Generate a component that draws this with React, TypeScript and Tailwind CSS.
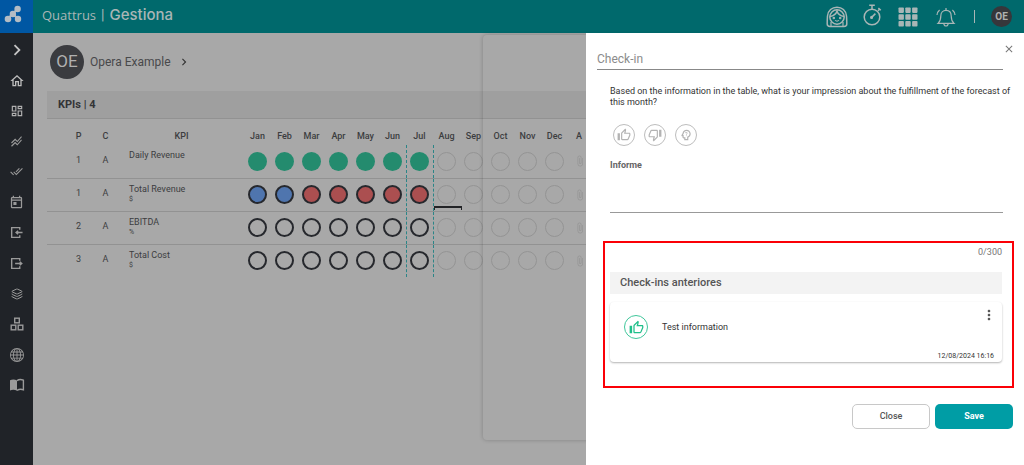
import React, { useState } from "react";
import { Layers } from "lucide-react";
import { BsGlobe } from "react-icons/bs";
import {
  MdAttachFile,
  MdChevronRight,
  MdClose,
  MdDoneAll,
  MdMoreVert,
  MdOutlineDashboard,
  MdOutlineHome,
  MdOutlinePsychologyAlt,
  MdOutlineThumbDown,
  MdOutlineThumbUp,
  MdOutlineToday,
  MdStackedLineChart,
} from "react-icons/md";

type Status = "green" | "blue" | "red" | "empty" | "future";

type Kpi = {
  p: number;
  c: string;
  name: string;
  unit?: string;
  months: Status[];
};

const MONTHS = ["Jan", "Feb", "Mar", "Apr", "May", "Jun", "Jul", "Aug", "Sep", "Oct", "Nov", "Dec"];

const future: Status[] = ["future", "future", "future", "future", "future"];
const fill = (s: Status, n: number): Status[] => Array(n).fill(s);

const KPIS: Kpi[] = [
  { p: 1, c: "A", name: "Daily Revenue", months: [...fill("green", 7), ...future] },
  { p: 1, c: "A", name: "Total Revenue", unit: "$", months: [...fill("blue", 2), ...fill("red", 5), ...future] },
  { p: 2, c: "A", name: "EBITDA", unit: "%", months: [...fill("empty", 7), ...future] },
  { p: 3, c: "A", name: "Total Cost", unit: "$", months: [...fill("empty", 7), ...future] },
];

const STATUS_CLASS: Record<Status, string> = {
  green: "bg-[#248b6e]",
  blue: "border-2 border-[#26282d] bg-[#4f75ae]",
  red: "border-2 border-[#26282d] bg-[#ab4f50]",
  empty: "border-2 border-[#26282d]",
  future: "border border-[#949494]",
};

const Logo = () => (
  <svg viewBox="0 0 18 18" className="h-[18px] w-[18px]" fill="#b4bcc4">
    <path d="M3.5 14 L13.5 4 M9 9 L14 14" stroke="#b4bcc4" strokeWidth="2" />
    <circle cx="13.6" cy="4" r="3.2" />
    <circle cx="8.9" cy="9" r="3.2" />
    <circle cx="4" cy="14" r="3.3" />
    <circle cx="14" cy="14" r="3.2" />
  </svg>
);

const BoxArrow = ({ out }: { out?: boolean }) => (
  <svg viewBox="0 0 14 14" className="h-[13px] w-[13px]" fill="none" stroke="currentColor" strokeWidth="1.5">
    <path d="M10.5 4 V1.8 H1.8 V12.2 H10.5 V10" />
    {out ? <path d="M5.5 7 H12.5 M10.5 5 L12.7 7 L10.5 9" /> : <path d="M13.5 7 H6.5 M8.7 5 L6.5 7 L8.7 9" />}
  </svg>
);

const Boxes = () => (
  <svg viewBox="0 0 14 14" className="h-[14px] w-[14px]" fill="none" stroke="currentColor" strokeWidth="1.4">
    <rect x="4.7" y="1.2" width="4.6" height="4.6" />
    <rect x="1.2" y="8.2" width="4.6" height="4.6" />
    <rect x="8.2" y="8.2" width="4.6" height="4.6" />
  </svg>
);

const Book = () => (
  <svg viewBox="0 0 16 14" className="h-[14px] w-4" fill="currentColor">
    <path d="M8 2.6 C6 1.2 3.2 1.3 1 2.2 V12.4 C3.2 11.5 6 11.5 8 12.8 Z" />
    <path
      d="M8 2.6 C10 1.2 12.4 1.3 14.4 2.2 V11.8 C12.4 11.1 10 11.2 8 12.4"
      fill="none"
      stroke="currentColor"
      strokeWidth="1.4"
    />
  </svg>
);

const Girl = () => (
  <svg viewBox="0 0 22 22" className="h-[22px] w-[22px]" fill="none" stroke="currentColor" strokeWidth="1.5">
    <path d="M1.2 18 C1.2 14 1.3 13 1.5 10 C2 4.5 6 1.2 11 1.2 C16 1.2 20 4.5 20.5 10 C20.7 13 20.8 14 20.8 18 C20.8 20 20 20.4 18 20.4 H4 C2 20.4 1.2 20 1.2 18 Z" />
    <circle cx="11" cy="11" r="7.2" />
    <path d="M3.8 10.5 C7.5 10 10 8.4 11 5 C12 8.4 14.5 10 18.2 10.5" />
    <path d="M5 16 V20 M17 16 V20" strokeWidth="1.2" />
    <path d="M9 14.4 Q11 15.8 13 14.4" strokeWidth="1.1" />
    <circle cx="7.8" cy="12" r="0.5" fill="currentColor" />
    <circle cx="14.2" cy="12" r="0.5" fill="currentColor" />
  </svg>
);

const Stopwatch = () => (
  <svg viewBox="0 0 20 22" className="h-[22px] w-5" fill="none" stroke="currentColor" strokeWidth="1.5">
    <circle cx="10" cy="13" r="7.8" />
    <path d="M10 5 V1.5 M7.2 1.2 H12.8 M16 6.8 L17.6 5.2 M16.4 4 L18.8 6.2 M9.4 13.6 L13.4 9.6" />
    <circle cx="9.6" cy="13.4" r="0.8" fill="currentColor" />
  </svg>
);

const AppsGrid = () => (
  <svg viewBox="0 0 20 20" className="h-5 w-5" fill="currentColor">
    {[0.5, 7.3, 14.1].map((y) => [0.5, 7.3, 14.1].map((x) => <rect key={`${x}-${y}`} x={x} y={y} width="5.4" height="5.4" rx="0.8" />))}
  </svg>
);

const Bell = () => (
  <svg viewBox="0 0 20 20" className="h-5 w-5" fill="none" stroke="currentColor" strokeWidth="1.2">
    <path d="M2 16.4 C4 14.6 4.8 13 4.8 9 C4.8 5.5 7 3.4 10 3.4 C13 3.4 15.2 5.5 15.2 9 C15.2 13 16 14.6 18 16.4 Z" />
    <path d="M10 3.4 V1 M7.8 16.6 Q8.2 19 10 19 Q11.8 19 12.2 16.6" />
    <path d="M3.6 3 Q1.2 5 1 8 M16.4 3 Q18.8 5 19 8" />
  </svg>
);

const NAV = [
  { label: "Expand", icon: <MdChevronRight size={22} className="text-[#c4c4c4]" /> },
  { label: "Home", icon: <MdOutlineHome size={16} className="text-[#bdbdbd]" /> },
  { label: "Dashboard", icon: <MdOutlineDashboard size={14} className="text-[#b0b0b0]" /> },
  { label: "Indicators", icon: <MdStackedLineChart size={13} /> },
  { label: "Tasks", icon: <MdDoneAll size={13} /> },
  { label: "Calendar", icon: <MdOutlineToday size={15} /> },
  { label: "Inputs", icon: <BoxArrow /> },
  { label: "Outputs", icon: <BoxArrow out /> },
  { label: "Layers", icon: <Layers size={12} /> },
  { label: "Structure", icon: <Boxes /> },
  { label: "Web", icon: <BsGlobe size={14} /> },
  { label: "Library", icon: <Book /> },
];

function TopBar() {
  return (
    <header className="flex h-[33px] items-center bg-[#00696c] text-[#a9b6b6]">
      <a href="#" aria-label="Quattrus" className="flex h-full w-[33px] items-center justify-center bg-[#0057a3] pr-[7px] pb-[6px]">
        <Logo />
      </a>
      <div className="flex items-center gap-[5px] pb-1 pl-[9px] leading-5">
        <span className="font-['Open_Sans',sans-serif] text-[13px]">Quattrus</span>
        <span className="text-[14px]">|</span>
        <span className="font-['Inter',sans-serif] text-[15px] font-medium">Gestiona</span>
      </div>
      <div className="ml-auto flex items-center pr-3">
        <button type="button" aria-label="Assistant"><Girl /></button>
        <button type="button" aria-label="Timer" className="ml-3.5 pb-1"><Stopwatch /></button>
        <button type="button" aria-label="Apps" className="ml-4"><AppsGrid /></button>
        <button type="button" aria-label="Notifications" className="ml-[18px]"><Bell /></button>
        <span className="mr-4 ml-[18px] h-[13px] w-px bg-[#a9b6b6]" />
        <button type="button" className="h-[21px] w-[21px] rounded-full bg-[#36373b] text-[10px] font-bold text-[#b0b0b0]">
          OE
        </button>
      </div>
    </header>
  );
}

function KpiTable() {
  return (
    <table className="mt-[8px] w-full table-fixed border-collapse text-[#3c3d40]">
      <colgroup>
        <col className="w-[45px]" />
        <col className="w-[27px]" />
        <col className="w-[125px]" />
        {MONTHS.map((m) => (
          <col key={m} className="w-[27px]" />
        ))}
        <col />
      </colgroup>
      <thead>
        <tr className="h-[18px] text-[9px] [&>th]:p-0 [&>th]:pt-[2px] [&>th]:font-medium">
          <th><div className="pl-[18px]">P</div></th>
          <th>C</th>
          <th>KPI</th>
          {MONTHS.map((m) => (
            <th key={m}>{m}</th>
          ))}
          <th className="text-left"><span className="pl-2">A</span></th>
        </tr>
      </thead>
      <tbody>
        {KPIS.map((k, row) => (
          <tr key={k.name} className="h-[33px] border-b border-[#929292] text-center text-[9px] last:border-b-0 [&>td]:p-0">
            <td><div className="pb-0.5 pl-[18px]">{k.p}</div></td>
            <td><div className="pb-0.5">{k.c}</div></td>
            <td className="text-left align-top">
              <div className="pt-[5px] pl-[10px] leading-[11px]">
                {k.name}
                {k.unit && <div className="text-[7px] leading-[8px]">{k.unit}</div>}
              </div>
            </td>
            {k.months.map((s, i) => (
              <td
                key={i}
                className={
                  i === 6
                    ? "relative border-x border-dashed border-[#2b8587]"
                    : "relative"
                }
              >
                <div className={`mx-auto h-[19px] w-[19px] rounded-full ${STATUS_CLASS[s]}`} />
                {row === 1 && i === 7 && (
                  <span className="absolute bottom-px left-0 h-1 w-7 border-x border-t-2 border-[#222326]" />
                )}
              </td>
            ))}
            <td>
              <MdAttachFile size={12} className="ml-1.5 text-[#959595]" />
            </td>
          </tr>
        ))}
      </tbody>
    </table>
  );
}

const REACTIONS = [
  { label: "Like", Icon: MdOutlineThumbUp },
  { label: "Dislike", Icon: MdOutlineThumbDown },
  { label: "Unsure", Icon: MdOutlinePsychologyAlt },
];

function CheckInDrawer() {
  const [report, setReport] = useState("");
  const [reaction, setReaction] = useState("");

  return (
    <aside className="absolute top-[33px] right-0 bottom-0 flex w-[438px] flex-col bg-white pl-[11px] text-[#333]">
      <div className="flex items-start justify-between pt-[10px] pr-[9px]">
        <h2 className="mt-[7px] flex-1 border-b border-[#888] text-[12px] leading-[19px] text-[#8b8b8b]">Check-in</h2>
        <button type="button" aria-label="Close panel" className="w-3 text-[#777]">
          <MdClose size={12} />
        </button>
      </div>

      <form onSubmit={(e) => e.preventDefault()} className="flex flex-col">
        <p className="mt-4 pr-1 pl-[13px] text-[9px] leading-[11px]">
          Based on the information in the table, what is your impression about the fulfillment of the forecast of this month?
        </p>

        <div className="pr-[21px] pl-[13px]">
          <div className="mt-4 ml-[3px] flex gap-[9px]">
            {REACTIONS.map(({ label, Icon }) => (
              <button
                key={label}
                type="button"
                aria-label={label}
                aria-pressed={reaction === label}
                onClick={() => setReaction(label)}
                className="flex h-[22px] w-[22px] items-center justify-center rounded-full border border-[#bdbdbd] text-[#b3b3b3]"
              >
                <Icon size={14} />
              </button>
            ))}
          </div>

          <label htmlFor="report" className="mt-[13px] block text-[9px] leading-3 font-bold text-[#666]">
            Informe
          </label>
          <textarea
            id="report"
            maxLength={300}
            value={report}
            onChange={(e) => setReport(e.target.value)}
            className="block h-[42px] w-full resize-none border-b border-[#999] text-[9px] outline-none"
          />
        </div>

        <section className="mt-7 mr-[10px] ml-[6px] border-2 border-[#fb0007] pr-[10px] pb-6 pl-[5px]">
          <p className="pt-[3px] text-right text-[9px] leading-3 text-[#777]">{report.length}/300</p>
          <h3 className="mt-[14px] bg-[#f3f3f3] pl-[10px] text-[11px] leading-[22px] font-medium text-[#555]">
            Check-ins anteriores
          </h3>
          <article className="mt-2 flex h-[60px] flex-col rounded-sm pr-2 pl-[14px] shadow-[0_1px_2px_rgba(0,0,0,0.3)]">
            <div className="flex flex-1 items-center">
              <span className="flex h-6 w-6 items-center justify-center rounded-full border border-[#3fc79b] text-[#1fbf8a]">
                <MdOutlineThumbUp size={15} />
              </span>
              <p className="ml-[14px] text-[9px] leading-3">Test information</p>
              <button type="button" aria-label="Options" className="-mr-[3px] mb-6 ml-auto text-[#555]">
                <MdMoreVert size={16} />
              </button>
            </div>
            <time className="pb-[2px] text-right text-[7px] leading-[8px]">12/08/2024 16:16</time>
          </article>
        </section>

        <div className="mt-4 flex justify-end gap-[5px] pr-[11px] text-[9px] font-medium">
          <button type="button" className="h-[25px] w-[78px] rounded-[5px] border border-[#c8c8c8] text-[#555]">
            Close
          </button>
          <button type="submit" className="h-[25px] w-[78px] rounded-[5px] bg-[#009da5] font-bold text-white">
            Save
          </button>
        </div>
      </form>
    </aside>
  );
}

export default function App() {
  return (
    <div className="relative flex min-h-screen flex-col overflow-hidden bg-[#a8a8a8] font-[Roboto,sans-serif]">
      <TopBar />
      <div className="flex flex-1">
        <nav className="flex w-[33px] flex-col bg-[#202328] text-[#9a9a9a]">
          {NAV.map((n, i) => (
            <a
              key={n.label}
              href="#"
              aria-label={n.label}
              className={
                i === 0
                  ? "flex h-[33px] items-center justify-center"
                  : i > 3 && i % 2 === 0
                    ? "flex h-[31px] items-center justify-center"
                    : "flex h-[30px] items-center justify-center"
              }
            >
              {n.icon}
            </a>
          ))}
        </nav>

        <main className="min-w-0 flex-1 pl-[14px]">
          <div className="flex items-center gap-[6px] pt-3 pl-[3px]">
            <span className="flex h-[34px] w-[34px] items-center justify-center rounded-full bg-[#3a3b3f] text-[17px] text-[#b0b0b0]">
              OE
            </span>
            <h1 className="text-[12px] leading-5 text-[#48494b]">Opera Example</h1>
            <MdChevronRight size={14} className="text-[#333]" />
          </div>

          <h2 className="mt-3 border-b border-[#929292] bg-[#9f9f9f] pl-[11px] text-[11px] leading-[27px] font-bold text-[#333437]">
            KPIs | 4
          </h2>

          <KpiTable />
        </main>
      </div>

      {/* card edge that sits behind the drawer */}
      <div className="pointer-events-none absolute top-[35px] right-0 bottom-[25px] w-[541px] rounded-[4px] shadow-[0_0_4px_rgba(0,0,0,0.22)]" />

      <CheckInDrawer />
    </div>
  );
}
